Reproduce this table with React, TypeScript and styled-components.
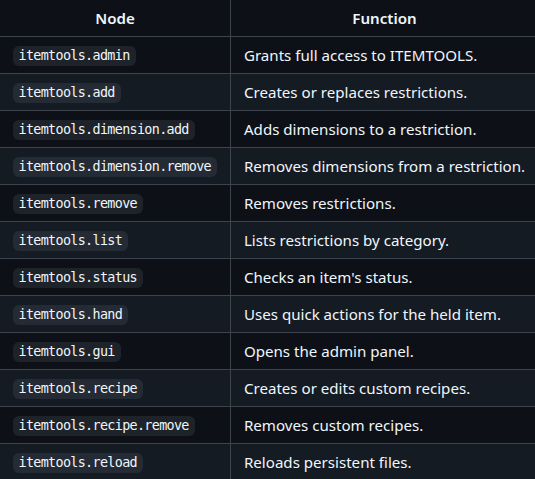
import styled, { createGlobalStyle } from "styled-components";

const GlobalStyle = createGlobalStyle`
  html, body {
    margin: 0;
    padding: 0;
    background: #0d1117;
  }
  body {
    overflow: hidden;
  }
`;

const Page = styled.div`
  width: 535px;
  height: 479px;
  overflow: hidden;
  background: #0d1117;
  color: #f0f6fc;
  font-family: "Segoe UI", "Noto Sans", "Liberation Sans", sans-serif;
  font-size: 15.1px;
  line-height: 24px;
`;

const Table = styled.table`
  border-collapse: collapse;
  border-spacing: 0;
  margin-left: -1px;
  margin-top: -1px;
  white-space: nowrap;
`;

const Row = styled.tr<{ $alt?: boolean }>`
  background: ${(p) => (p.$alt ? "#151b23" : "#0d1117")};
  border-top: 1px solid #3d444d;
`;

const HeadCell = styled.th`
  height: 24px;
  padding: 6px 13px;
  border: 1px solid #3d444d;
  font-weight: 600;
  text-align: center;
`;

const Cell = styled.td`
  height: 24px;
  padding: 6px 13px;
  border: 1px solid #3d444d;
  text-align: left;
  vertical-align: middle;
`;

const Code = styled.code`
  display: inline-block;
  vertical-align: middle;
  font-family: Consolas, "DejaVu Sans Mono", "Liberation Mono", monospace;
  font-size: 13.4px;
  line-height: 14px;
  letter-spacing: -0.66px;
  padding: 3px 6px 3px 5.5px;
  margin-top: -2px;
  border-radius: 6px;
  background: rgba(101, 108, 118, 0.2);
  white-space: nowrap;
`;

const rows: [string, string][] = [
  ["itemtools.admin", "Grants full access to ITEMTOOLS."],
  ["itemtools.add", "Creates or replaces restrictions."],
  ["itemtools.dimension.add", "Adds dimensions to a restriction."],
  ["itemtools.dimension.remove", "Removes dimensions from a restriction."],
  ["itemtools.remove", "Removes restrictions."],
  ["itemtools.list", "Lists restrictions by category."],
  ["itemtools.status", "Checks an item's status."],
  ["itemtools.hand", "Uses quick actions for the held item."],
  ["itemtools.gui", "Opens the admin panel."],
  ["itemtools.recipe", "Creates or edits custom recipes."],
  ["itemtools.recipe.remove", "Removes custom recipes."],
  ["itemtools.reload", "Reloads persistent files."],
];

export default function App() {
  return (
    <>
      <GlobalStyle />
      <Page>
        <Table>
          <thead>
            <Row>
              <HeadCell>Node</HeadCell>
              <HeadCell>Function</HeadCell>
            </Row>
          </thead>
          <tbody>
            {rows.map(([node, fn], i) => (
              <Row key={node} $alt={i % 2 === 1}>
                <Cell>
                  <Code>{node}</Code>
                </Cell>
                <Cell>{fn}</Cell>
              </Row>
            ))}
          </tbody>
        </Table>
      </Page>
    </>
  );
}
